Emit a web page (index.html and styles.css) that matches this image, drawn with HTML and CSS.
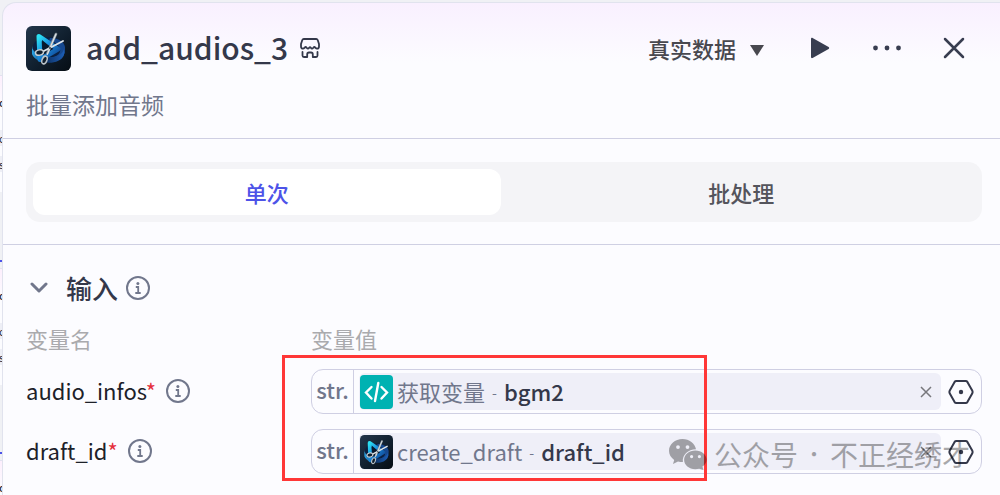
FILE: index.html
```html
<!DOCTYPE html>
<html lang="zh-CN">
<head>
<meta charset="utf-8">
<meta name="viewport" content="width=device-width, initial-scale=1">
<title>add_audios_3</title>
<link rel="stylesheet" href="styles.css">
</head>
<body>
<svg class="defs" aria-hidden="true">
  <defs>
    <linearGradient id="tile" x1="0" y1="0" x2="1" y2="1">
      <stop offset="0" stop-color="#23364b"/><stop offset=".55" stop-color="#101f2e"/><stop offset="1" stop-color="#060d14"/>
    </linearGradient>
    <linearGradient id="cyan" x1="0" y1="0" x2="1" y2="1">
      <stop offset="0" stop-color="#2be0f2"/><stop offset=".4" stop-color="#1a8fe0"/><stop offset="1" stop-color="#0f3f8c"/>
    </linearGradient>
    <linearGradient id="ring" x1="0" y1="0" x2="1" y2="0">
      <stop offset="0" stop-color="#2aa5e8"/><stop offset=".4" stop-color="#0d2f60"/><stop offset="1" stop-color="#1c5db4"/>
    </linearGradient>
    <symbol id="clip-logo" viewBox="0 0 45 45">
      <rect width="45" height="45" rx="6" fill="url(#tile)"/>
      <ellipse cx="23" cy="21" rx="16" ry="10" fill="#0b2143"/>
      <path d="M24 12c7 0 14 3 15 9v6c-2 4-6 6-10 7l-4-2c7-2 10-5 9-9-1-5-6-8-11-8z" fill="#16488f"/>
      <path d="M6 20c0 12 29 16 32 3v6c-4 11-28 10-32-1z" fill="url(#ring)"/>
      <path d="M13 10.500L32 23 14 33.500z" fill="none" stroke="url(#cyan)" stroke-width="5" stroke-linejoin="round"/>
      <path d="M16 14l11 9-10 6z" fill="#07182c"/>
      <path d="M30 8l-8.500 19" stroke="#8d979f" stroke-width="2.600" stroke-linecap="round"/>
      <path d="M37 15L16 26" stroke="#dfe5e9" stroke-width="1.900" stroke-linecap="round"/>
      <path d="M30 8l-9 21" stroke="#dce3e7" stroke-width="1.200"/>
      <ellipse cx="13.500" cy="26.500" rx="4" ry="2.700" fill="#101f2e" stroke="#c7ced3" stroke-width="1.500" transform="rotate(-12 13.500 26.500)"/>
      <ellipse cx="18.500" cy="34" rx="2.400" ry="4" fill="#101f2e" stroke="#b9c2c8" stroke-width="1.500" transform="rotate(22 18.500 34)"/>
      <circle cx="24" cy="22" r="1.200" fill="#52606b"/>
    </symbol>
    <symbol id="info" viewBox="0 0 24 24">
      <circle cx="12" cy="12" r="11" fill="none" stroke="currentColor" stroke-width="2"/>
      <circle cx="11.900" cy="7.500" r="1.500" fill="currentColor"/>
      <path d="M9.800 11h2.400v5.800M9.300 17h5.400" fill="none" stroke="currentColor" stroke-width="1.800"/>
    </symbol>
    <symbol id="hex" viewBox="0 0 26 24">
      <path d="M8.300 1h9.400c.7 0 1.300.3 1.700.9l4.800 8.700c.5.900.5 1.900 0 2.800l-4.800 8.700c-.4.600-1 .9-1.700.9H8.300c-.7 0-1.300-.3-1.700-.9l-4.800-8.700c-.5-.9-.5-1.900 0-2.800l4.800-8.700c.4-.6 1-.9 1.700-.9z" fill="none" stroke="currentColor" stroke-width="2"/>
      <circle cx="13" cy="12" r="2.200" fill="currentColor"/>
    </symbol>
    <symbol id="remove" viewBox="0 0 12 12">
      <path d="M1 1l10 10M11 1L1 11" stroke="currentColor" stroke-width="1.500"/>
    </symbol>
  </defs>
</svg>

<div class="canvas" aria-hidden="true">
  <div class="node node-a"><b>d</b><i>c</i><i>s</i></div>
  <div class="node node-b"><b>d</b><i>c</i><i>s</i></div>
  <div class="node node-c"><b>d</b></div>
  <span class="edge edge-a"></span>
  <span class="edge edge-b"></span>
</div>

<main class="panel">
  <header class="head">
    <div class="head-row">
      <svg class="logo" aria-hidden="true"><use href="#clip-logo"/></svg>
      <h1 class="title">add_audios_3</h1>
      <svg class="store" viewBox="0 0 20 20" fill="none" stroke="currentColor" stroke-width="1.800" stroke-linejoin="round" stroke-linecap="round" aria-hidden="true">
        <path d="M3.800 1h12.400c.7 0 1.200.3 1.500 1L19 6v2.500c0 1.300-.8 2.200-2 2.200-1.400 0-1.800-1.700-2.600-1.700-1 0-1.200 1.700-2.400 1.700-1.100 0-1.200-1.500-2-1.500s-.9 1.500-2 1.500C6.800 10.700 6.600 9 5.600 9c-.8 0-1.200 1.700-2.600 1.700-1.200 0-2-.9-2-2.200V6l1.300-4c.3-.7.800-1 1.500-1z"/>
        <path d="M2.500 14v3.500c0 .9.500 1.500 1.400 1.500h3.300v-2.600c0-1.200.6-1.900 1.800-1.900h2c1.200 0 1.800.7 1.800 1.900V19h3.300c.9 0 1.400-.6 1.400-1.500V14"/>
      </svg>
      <div class="actions">
        <label class="mode">
          <select class="mode-select" aria-label="数据模式"><option>真实数据</option></select>
          <svg class="caret" viewBox="0 0 14 12" aria-hidden="true"><path d="M0 1h14L7 12z" fill="currentColor"/></svg>
        </label>
        <button class="icon-btn" aria-label="运行"><svg class="play" viewBox="0 0 20 22"><path d="M1 2c0-1 .8-1.400 1.600-1l16 9c.8.500.8 1.500 0 2l-16 9c-.8.400-1.600 0-1.600-1z" fill="currentColor"/></svg></button>
        <button class="icon-btn" aria-label="更多"><svg class="more" viewBox="0 0 30 6"><g fill="currentColor"><circle cx="3.500" cy="3" r="2.400"/><circle cx="15" cy="3" r="2.400"/><circle cx="26.500" cy="3" r="2.400"/></g></svg></button>
        <button class="icon-btn" aria-label="关闭"><svg class="close" viewBox="0 0 22 22"><path d="M2 2l18 18M20 2L2 20" stroke="currentColor" stroke-width="2.500" stroke-linecap="round"/></svg></button>
      </div>
    </div>
    <p class="desc">批量添加音频</p>
  </header>

  <section class="tabs-wrap">
    <div class="tabs" role="tablist">
      <button class="tab tab-on" role="tab" aria-selected="true">单次</button>
      <button class="tab" role="tab" aria-selected="false">批处理</button>
    </div>
  </section>

  <section class="inputs">
    <div class="section-head">
      <button class="fold" aria-label="收起"><svg class="chevron" viewBox="0 0 18 12"><path d="M2 2l7 7 7-7" fill="none" stroke="currentColor" stroke-width="3" stroke-linecap="round" stroke-linejoin="round"/></svg></button>
      <h2 class="section-title">输入</h2>
      <svg class="info"><use href="#info"/></svg>
    </div>
    <div class="grid">
      <div class="col-name">变量名</div>
      <div class="col-name">变量值</div>

      <div class="var"><span class="var-name">audio_infos<span class="req">*</span></span><svg class="info"><use href="#info"/></svg></div>
      <div class="field">
        <span class="type">str.</span>
        <div class="token">
          <svg class="token-icon" viewBox="0 0 33 34" aria-hidden="true"><rect width="33" height="34" rx="4" fill="#00b2b2"/><path d="M11.500 12L6 17.500l5.500 6M21.500 12l5.500 5.500-5.500 6M18.300 8l-3.300 18" fill="none" stroke="#fff" stroke-width="2.400" stroke-linecap="round"/></svg>
          <span class="source">获取变量</span><span class="dash">-</span><span class="name">bgm2</span>
          <button class="remove" aria-label="清除"><svg class="remove-icon"><use href="#remove"/></svg></button>
        </div>
        <button class="picker" aria-label="选择变量"><svg class="hex"><use href="#hex"/></svg></button>
      </div>

      <div class="var"><span class="var-name">draft_id<span class="req">*</span></span><svg class="info"><use href="#info"/></svg></div>
      <div class="field">
        <span class="type">str.</span>
        <div class="token">
          <svg class="token-icon" viewBox="0 0 45 45" preserveAspectRatio="none" aria-hidden="true"><use href="#clip-logo" width="45" height="45"/></svg>
          <span class="source">create_draft</span><span class="dash">-</span><span class="name">draft_id</span>
          <button class="remove" aria-label="清除"><svg class="remove-icon"><use href="#remove"/></svg></button>
        </div>
        <button class="picker" aria-label="选择变量"><svg class="hex"><use href="#hex"/></svg></button>
      </div>
    </div>
  </section>
</main>

<div class="highlight"></div>
<div class="watermark">
  <svg class="wechat" viewBox="0 0 38 31" aria-hidden="true">
    <path fill="currentColor" fill-rule="evenodd" d="M13.500 0C6 0 0 5.200 0 11.700c0 3.800 2 7 5.200 9.200L4 25l5-2.600c1.500.4 3.200.7 4.900.7C13 16 19 10.300 27 10.300 26 4.300 20.300 0 13.500 0zM9 6.200a1.900 1.900 0 110 3.800 1.900 1.900 0 010-3.800zm9.500 0a1.900 1.900 0 110 3.800 1.900 1.900 0 010-3.800z"/>
    <path fill="currentColor" fill-rule="evenodd" d="M26.300 11.500c-6.200 0-11.200 4.200-11.200 9.300 0 5.200 5 9.400 11.200 9.400 1.400 0 2.700-.2 3.900-.5l4.200 1.300-1-3.400c2.500-1.700 4.200-4.100 4.200-6.800 0-5.100-5.100-9.300-11.300-9.300zM22.600 16a1.600 1.600 0 110 3.200 1.600 1.600 0 010-3.200zm7.800 0a1.600 1.600 0 110 3.200 1.600 1.600 0 010-3.200z"/>
  </svg>
  <span>公众号</span><span class="mid">·</span><span>不正经绣才</span>
</div>
</body>
</html>
```

FILE: styles.css
```css
* { box-sizing: border-box; }
body {
  margin: 0;
  min-height: 100vh;
  padding: 2px 0 0 2px;
  display: flex;
  overflow: hidden;
  background: #f0f1f5;
  color: #1d2129;
  font-family: "Noto Sans CJK SC", "Noto Sans", sans-serif;
}
button, select { font: inherit; color: inherit; border: 0; background: none; padding: 0; margin: 0; }
svg { display: block; flex: none; }
h1, h2, p { margin: 0; }
.defs { position: absolute; width: 0; height: 0; }

/* workflow canvas behind the panel */
.canvas { position: absolute; inset: 0; overflow: hidden; }
.node {
  position: absolute; left: -20px; width: 40px; padding: 18px 0 10px 19px;
  border-top: 1px solid #e2e2f0;
  background: linear-gradient(#fdeffd, #fcfcff 30px);
  color: #2a2d3c; line-height: 16px;
}
.node b { display: block; font-size: 11px; font-weight: 500; margin-bottom: 20px; }
.node i { display: block; font-size: 11px; font-style: normal; margin-bottom: 10px; background: #eeeff6; }
.node-a { top: 75px; }
.node-b { top: 268px; }
.node-c { top: 460px; }
.edge { position: absolute; left: 0; width: 8px; height: 2px; background: #4d53e8; }
.edge-a { top: 260px; }
.edge-b { top: 452px; }

.panel {
  position: relative; flex: 1; min-width: 0;
  border: solid #e1e3ee; border-width: 1px 0 0 1px;
  border-top-left-radius: 14px;
  background: linear-gradient(#f9f0ff, #fcfcff 60px);
}
.head { padding: 21px 26px 17px 23px; border-bottom: 1px solid #cfcfe3; }
.head-row { display: flex; align-items: center; height: 48px; }
.logo { width: 45px; height: 45px; }
.title { margin-left: 15px; padding-bottom: 2px; font-size: 30px; line-height: 44px; font-weight: 500; color: #34384a; }
.store { width: 20px; height: 20px; margin-left: 12px; color: #34384a; }
.actions { margin-left: auto; display: flex; align-items: center; color: #383d50; }
.mode { display: flex; align-items: center; gap: 13px; color: #48484f; margin-right: 36px; }
.mode-select { appearance: none; font-size: 22px; line-height: 32px; font-weight: 500; outline: 0; }
.caret { width: 14px; height: 12px; margin-top: 4px; }
.icon-btn { display: grid; place-items: center; width: 40px; height: 40px; }
.icon-btn + .icon-btn { margin-left: 27px; }
.play { width: 20px; height: 22px; }
.more { width: 30px; height: 6px; }
.close { width: 22px; height: 22px; }
.desc { margin-top: 15px; font-size: 23px; line-height: 34px; color: #71778c; }

.tabs-wrap { padding: 23px 18px 22px 23px; border-bottom: 1px solid #cfd0e3; }
.tabs { display: grid; grid-template-columns: 1fr 1fr; gap: 7px; padding: 7px; border-radius: 14px; background: #f4f4f7; }
.tab { height: 46px; border-radius: 12px; font-size: 22px; line-height: 32px; font-weight: 500; color: #54545c; }
.tab-on { background: #fff; color: #4d53e8; }

.inputs { padding: 22px 18px 0 23px; }
.section-head { display: flex; align-items: center; height: 42px; }
.fold { display: grid; place-items: center; width: 26px; height: 26px; }
.chevron { width: 18px; height: 12px; }
.fold, .info { color: #71778c; }
.section-title { margin: 0 8px 0 14px; font-size: 26px; line-height: 38px; font-weight: 500; color: #34384a; }
.info { width: 24px; height: 24px; }
.grid { display: grid; grid-template-columns: 285px 1fr; row-gap: 15px; }
.col-name { padding-top: 13px; height: 45px; font-size: 22px; line-height: 32px; color: #aaaaad; }
.var { display: flex; align-items: center; gap: 10px; padding-bottom: 1px; font-size: 22px; line-height: 32px; }
.var-name { padding-bottom: 3px; }
.req { color: #e5303d; }
.field {
  display: flex; align-items: center; height: 45px; min-width: 0;
  border: 1px solid #cfcfe3; border-radius: 12px;
}
.type {
  align-self: stretch; width: 42px; border-right: 1px solid #cfcfe3;
  font-size: 22px; line-height: 39px; text-align: center; font-weight: 500; color: #71778c;
}
.token {
  display: flex; align-items: center; flex: 1; min-width: 0; height: 37px; margin-left: 5px;
  border-radius: 6px; background: #efeff8; font-size: 22px; line-height: 32px;
}
.token-icon { width: 33px; height: 34px; margin-left: 1px; margin-right: 4px; }
.source, .name { padding-bottom: 2px; }
.source { color: #71778c; }
.dash { margin: 0 7px; font-size: 14px; color: #71778c; }
.name { color: #34384a; font-weight: 500; }
.remove { margin-left: auto; width: 30px; height: 30px; display: grid; place-items: center; color: #77777c; }
.remove-icon { width: 12px; height: 12px; }
.picker { width: 40px; height: 40px; display: grid; place-items: center; color: #34384a; }
.hex { width: 26px; height: 24px; }

/* marks laid over the panel */
.highlight { position: absolute; left: 282px; top: 355px; width: 425px; height: 126px; border: 3px solid #ff3737; pointer-events: none; }
.watermark {
  position: absolute; left: 669px; top: 433px; display: flex; align-items: center;
  color: #000; opacity: .33; font-size: 28px; line-height: 42px; white-space: nowrap; pointer-events: none;
}
.wechat { width: 38px; height: 31px; margin-right: 7px; }
.mid { width: 32px; text-align: center; font-size: 20px; }
```
